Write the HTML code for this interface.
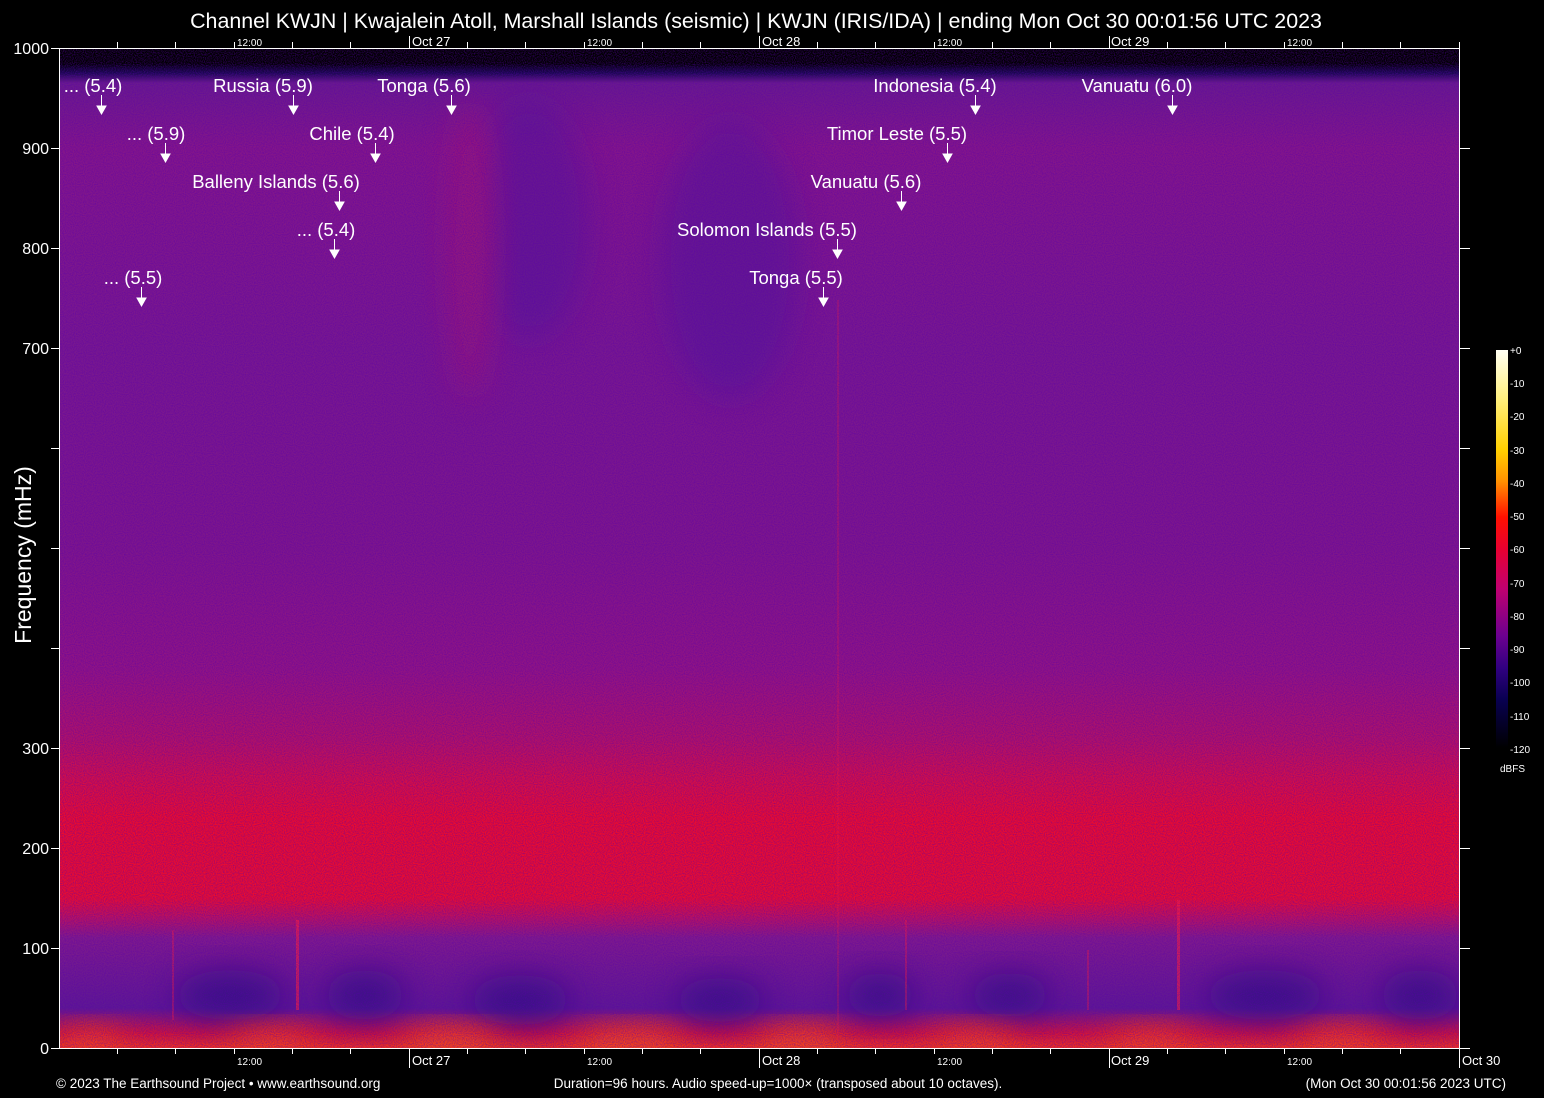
<!DOCTYPE html>
<html><head><meta charset="utf-8"><style>
html,body{margin:0;padding:0;background:#000;width:1544px;height:1098px;overflow:hidden}
svg{display:block}
text{font-family:"Liberation Sans",Arial,sans-serif;fill:#fff}
</style></head><body>
<svg width="1544" height="1098" viewBox="0 0 1544 1098" xmlns="http://www.w3.org/2000/svg">
<defs>
<linearGradient id="bg" x1="0" y1="48" x2="0" y2="1048" gradientUnits="userSpaceOnUse">
<stop offset="0" stop-color="#000"/>
<stop offset="0.015" stop-color="#000"/>
<stop offset="0.025" stop-color="#1a0850"/>
<stop offset="0.035" stop-color="#6a1a8e"/>
<stop offset="0.1" stop-color="#84168a"/>
<stop offset="0.3" stop-color="#781890"/>
<stop offset="0.5" stop-color="#7e168c"/>
<stop offset="0.62" stop-color="#901484"/>
<stop offset="0.69" stop-color="#b01268"/>
<stop offset="0.73" stop-color="#d20f4a"/>
<stop offset="0.77" stop-color="#ea0c30"/>
<stop offset="0.85" stop-color="#e80d32"/>
<stop offset="0.87" stop-color="#b81262"/>
<stop offset="0.89" stop-color="#801a8c"/>
<stop offset="0.92" stop-color="#701a90"/>
<stop offset="0.96" stop-color="#5e1894"/>
<stop offset="0.985" stop-color="#d0143c"/>
<stop offset="1" stop-color="#f03020"/>
</linearGradient>
<linearGradient id="cb" x1="0" y1="350" x2="0" y2="748" gradientUnits="userSpaceOnUse">
<stop offset="0" stop-color="#fffff4"/>
<stop offset="0.12" stop-color="#fff080"/>
<stop offset="0.25" stop-color="#ffd000"/>
<stop offset="0.33" stop-color="#ff9000"/>
<stop offset="0.42" stop-color="#ff1000"/>
<stop offset="0.5" stop-color="#e80030"/>
<stop offset="0.6" stop-color="#c00070"/>
<stop offset="0.72" stop-color="#6a0090"/>
<stop offset="0.8" stop-color="#300080"/>
<stop offset="0.88" stop-color="#080050"/>
<stop offset="1" stop-color="#000"/>
</linearGradient>
<filter id="noise" x="0" y="0" width="100%" height="100%">
<feTurbulence type="fractalNoise" baseFrequency="0.9" numOctaves="1" seed="3"/>
<feColorMatrix values="0 0 0 0 0.1  0 0 0 0 0  0 0 0 0 0.4  0 0 0 -2.2 1.4"/>
</filter>
<filter id="blur" x="-50%" y="-50%" width="200%" height="200%" filterUnits="objectBoundingBox"><feGaussianBlur stdDeviation="16"/></filter>
<filter id="blur2" x="-200%" y="-20%" width="500%" height="140%"><feGaussianBlur stdDeviation="2"/></filter>
<clipPath id="clip"><rect x="59" y="48" width="1400" height="1000"/></clipPath>
</defs>
<rect x="59" y="48" width="1400" height="1000" fill="url(#bg)"/>
<g clip-path="url(#clip)">
<g opacity="0.45">
<ellipse cx="530" cy="220" rx="60" ry="120" fill="#4a149a" filter="url(#blur)"/>
<ellipse cx="730" cy="260" rx="70" ry="140" fill="#4a149a" filter="url(#blur)"/>
<ellipse cx="470" cy="250" rx="25" ry="150" fill="#b0186a" filter="url(#blur)"/>
</g>
<g opacity="0.7">
<ellipse cx="230" cy="995" rx="55" ry="25" fill="#2a0a80" filter="url(#blur)"/>
<ellipse cx="365" cy="995" rx="40" ry="25" fill="#2a0a80" filter="url(#blur)"/>
<ellipse cx="520" cy="1000" rx="50" ry="25" fill="#2a0a80" filter="url(#blur)"/>
<ellipse cx="720" cy="1000" rx="45" ry="22" fill="#2a0a80" filter="url(#blur)"/>
<ellipse cx="880" cy="995" rx="35" ry="22" fill="#2a0a80" filter="url(#blur)"/>
<ellipse cx="1010" cy="995" rx="40" ry="22" fill="#2a0a80" filter="url(#blur)"/>
<ellipse cx="1265" cy="995" rx="60" ry="25" fill="#2a0a80" filter="url(#blur)"/>
<ellipse cx="1420" cy="995" rx="40" ry="25" fill="#2a0a80" filter="url(#blur)"/>
<ellipse cx="450" cy="1042" rx="50" ry="14" fill="#ff6010" filter="url(#blur)"/>
<ellipse cx="630" cy="1042" rx="55" ry="14" fill="#ff6010" filter="url(#blur)"/>
<ellipse cx="800" cy="1042" rx="45" ry="14" fill="#ff6010" filter="url(#blur)"/>
<ellipse cx="975" cy="1042" rx="45" ry="14" fill="#ff5010" filter="url(#blur)"/>
<ellipse cx="1150" cy="1042" rx="45" ry="14" fill="#ff5010" filter="url(#blur)"/>
<ellipse cx="1340" cy="1042" rx="45" ry="14" fill="#ff5010" filter="url(#blur)"/>
<ellipse cx="270" cy="1042" rx="45" ry="14" fill="#ff5010" filter="url(#blur)"/>
<ellipse cx="90" cy="1042" rx="35" ry="14" fill="#ff5010" filter="url(#blur)"/>
</g>
<g fill="#ff2040" opacity="0.6">
<rect x="296" y="920" width="3" height="90"/>
<rect x="1177" y="900" width="3" height="110"/>
<rect x="837" y="300" width="2" height="740" opacity="0.4"/>
<rect x="172" y="930" width="2" height="90" opacity="0.6"/>
<rect x="905" y="920" width="2" height="90" opacity="0.6"/>
<rect x="1087" y="950" width="2" height="60" opacity="0.6"/>
</g>
<rect x="59" y="48" width="1400" height="1000" filter="url(#noise)" opacity="0.55"/>
</g>
<g stroke="#fff" stroke-width="1" fill="none">
<line x1="59.5" y1="48" x2="59.5" y2="1048"/>
<line x1="1459.5" y1="48" x2="1459.5" y2="1048"/>
<line x1="59" y1="48.5" x2="1460" y2="48.5"/>
<line x1="59" y1="1048.5" x2="1460" y2="1048.5"/>
<path d="M51 48.5h8M51 148.5h8M51 248.5h8M51 348.5h8M51 448.5h8M51 548.5h8M51 648.5h8M51 748.5h8M51 848.5h8M51 948.5h8M51 1048.5h8"/>
<path d="M1460 148.5h10M1460 248.5h10M1460 348.5h10M1460 448.5h10M1460 548.5h10M1460 648.5h10M1460 748.5h10M1460 848.5h10M1460 948.5h10M1460 1048.5h10"/>
<path d="M117.5 42v6M175.5 42v6M234.5 42v6M292.5 42v6M350.5 42v6M409.5 36v12M467.5 42v6M525.5 42v6M584.5 42v6M642.5 42v6M700.5 42v6M759.5 36v12M817.5 42v6M875.5 42v6M934.5 42v6M992.5 42v6M1050.5 42v6M1109.5 36v12M1167.5 42v6M1225.5 42v6M1284.5 42v6M1342.5 42v6M1400.5 42v6M1459.5 42v6"/>
<path d="M117.5 1048v6M175.5 1048v6M234.5 1048v6M292.5 1048v6M350.5 1048v6M409.5 1048v20M467.5 1048v6M525.5 1048v6M584.5 1048v6M642.5 1048v6M700.5 1048v6M759.5 1048v20M817.5 1048v6M875.5 1048v6M934.5 1048v6M992.5 1048v6M1050.5 1048v6M1109.5 1048v20M1167.5 1048v6M1225.5 1048v6M1284.5 1048v6M1342.5 1048v6M1400.5 1048v6M1459.5 1048v20"/>
</g>
<text x="756" y="28" font-size="21.4" text-anchor="middle">Channel KWJN | Kwajalein Atoll, Marshall Islands (seismic) | KWJN (IRIS/IDA) | ending Mon Oct 30 00:01:56 UTC 2023</text>
<g font-size="16" text-anchor="end">
<text x="49" y="54">1000</text><text x="49" y="154">900</text><text x="49" y="254">800</text><text x="49" y="354">700</text>
<text x="49" y="754">300</text><text x="49" y="854">200</text><text x="49" y="954">100</text><text x="49" y="1054">0</text>
</g>
<text transform="translate(31,555) rotate(-90)" font-size="23" text-anchor="middle">Frequency (mHz)</text>
<g font-size="10">
<text x="237" y="46">12:00</text><text x="587" y="46">12:00</text><text x="937" y="46">12:00</text><text x="1287" y="46">12:00</text>
<text x="237" y="1065">12:00</text><text x="587" y="1065">12:00</text><text x="937" y="1065">12:00</text><text x="1287" y="1065">12:00</text>
</g>
<g font-size="13">
<text x="412" y="46">Oct 27</text><text x="762" y="46">Oct 28</text><text x="1111" y="46">Oct 29</text>
<text x="412" y="1065">Oct 27</text><text x="762" y="1065">Oct 28</text><text x="1111" y="1065">Oct 29</text><text x="1462" y="1065">Oct 30</text>
</g>
<g font-size="13.5">
<text x="56" y="1088">© 2023 The Earthsound Project • www.earthsound.org</text>
<text x="778" y="1088" text-anchor="middle">Duration=96 hours. Audio speed-up=1000× (transposed about 10 octaves).</text>
<text x="1506" y="1088" text-anchor="end">(Mon Oct 30 00:01:56 2023 UTC)</text>
</g>
<rect x="1496" y="350" width="12" height="398" fill="url(#cb)"/>
<g font-size="10">
<text x="1510" y="354">+0</text><text x="1510" y="387">-10</text><text x="1510" y="420">-20</text><text x="1510" y="454">-30</text>
<text x="1510" y="487">-40</text><text x="1510" y="520">-50</text><text x="1510" y="553">-60</text><text x="1510" y="587">-70</text>
<text x="1510" y="620">-80</text><text x="1510" y="653">-90</text><text x="1510" y="686">-100</text><text x="1510" y="720">-110</text>
<text x="1510" y="753">-120</text><text x="1500" y="772">dBFS</text>
</g>
<g font-size="18.5" text-anchor="middle">
<text x="93" y="92">... (5.4)</text>
<text x="263" y="92">Russia (5.9)</text>
<text x="424" y="92">Tonga (5.6)</text>
<text x="935" y="92">Indonesia (5.4)</text>
<text x="1137" y="92">Vanuatu (6.0)</text>
<text x="156" y="140">... (5.9)</text>
<text x="352" y="140">Chile (5.4)</text>
<text x="897" y="140">Timor Leste (5.5)</text>
<text x="276" y="188">Balleny Islands (5.6)</text>
<text x="866" y="188">Vanuatu (5.6)</text>
<text x="326" y="236">... (5.4)</text>
<text x="767" y="236">Solomon Islands (5.5)</text>
<text x="133" y="284">... (5.5)</text>
<text x="796" y="284">Tonga (5.5)</text>
</g>
<g fill="#fff" stroke="#fff" stroke-width="1">
<path d="M101.5 95v11M97 106h9l-4.5 8z"/>
<path d="M293.5 95v11M289 106h9l-4.5 8z"/>
<path d="M451.5 95v11M447 106h9l-4.5 8z"/>
<path d="M975.5 95v11M971 106h9l-4.5 8z"/>
<path d="M1172.5 95v11M1168 106h9l-4.5 8z"/>
<path d="M165.5 143v11M161 154h9l-4.5 8z"/>
<path d="M375.5 143v11M371 154h9l-4.5 8z"/>
<path d="M947.5 143v11M943 154h9l-4.5 8z"/>
<path d="M339.5 191v11M335 202h9l-4.5 8z"/>
<path d="M901.5 191v11M897 202h9l-4.5 8z"/>
<path d="M334.5 239v11M330 250h9l-4.5 8z"/>
<path d="M837.5 239v11M833 250h9l-4.5 8z"/>
<path d="M141.5 287v11M137 298h9l-4.5 8z"/>
<path d="M823.5 287v11M819 298h9l-4.5 8z"/>
</g>
</svg>
</body></html>
